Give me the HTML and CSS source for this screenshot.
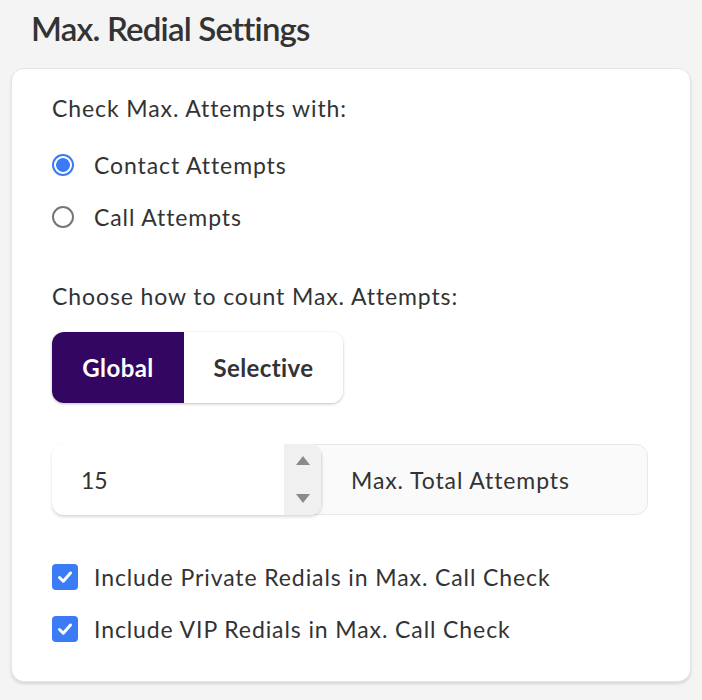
FILE: index.html
```html
<!DOCTYPE html>
<html>
<head>
<meta charset="utf-8">
<link rel="stylesheet" href="styles.css">
</head>
<body>
<h1 class="title">Max. Redial Settings</h1>
<section class="card">
  <p class="label">Check Max. Attempts with:</p>
  <div class="options">
    <label class="option"><span class="radio checked"></span>Contact Attempts</label>
    <label class="option"><span class="radio"></span>Call Attempts</label>
  </div>
  <p class="label label-count">Choose how to count Max. Attempts:</p>
  <div class="segmented">
    <span class="seg active">Global</span>
    <span class="seg">Selective</span>
  </div>
  <div class="input-group">
    <div class="number">
      <span class="value">15</span>
      <span class="spinner">
        <svg width="14" height="9" viewBox="0 0 14 9"><path d="M7 0 L14 9 L0 9 Z" fill="#8a8a8a"/></svg>
        <svg width="14" height="9" viewBox="0 0 14 9"><path d="M0 0 L14 0 L7 9 Z" fill="#8a8a8a"/></svg>
      </span>
    </div>
    <div class="addon">Max. Total Attempts</div>
  </div>
  <div class="checks">
    <label class="option"><span class="checkbox"><svg width="18" height="18" viewBox="0 0 18 18"><path d="M3.5 9.5 L7.3 13.2 L14.5 5" fill="none" stroke="#fff" stroke-width="3" stroke-linecap="round" stroke-linejoin="round"/></svg></span>Include Private Redials in Max. Call Check</label>
    <label class="option"><span class="checkbox"><svg width="18" height="18" viewBox="0 0 18 18"><path d="M3.5 9.5 L7.3 13.2 L14.5 5" fill="none" stroke="#fff" stroke-width="3" stroke-linecap="round" stroke-linejoin="round"/></svg></span>Include VIP Redials in Max. Call Check</label>
  </div>
</section>
</body>
</html>
```
FILE: styles.css
```css
html, body {
  margin: 0;
  padding: 0;
}
body {
  background: #f4f4f4;
  font-family: "Lato", "Noto Sans", sans-serif;
  color: #333333;
  width: 702px;
  height: 700px;
  overflow: hidden;
}
.title {
  margin: 0;
  padding: 8px 0 0 31px;
  font-size: 33px;
  font-weight: 600;
  letter-spacing: -0.8px;
  line-height: 40px;
  height: 60px;
}
.card {
  margin: 0 11px 0 11px;
  background: #fff;
  border: 1px solid #e6e6e6;
  border-radius: 13px;
  box-shadow: 0 2px 3px rgba(0,0,0,0.12);
  padding: 23px 40px 36px 40px;
}
.label {
  margin: 0;
  font-size: 23px;
  letter-spacing: 0.9px;
  line-height: 32px;
}
.options {
  display: flex;
  flex-direction: column;
  gap: 20px;
  margin-top: 25px;
}
.option {
  display: flex;
  align-items: center;
  gap: 16px;
  font-size: 23px;
  letter-spacing: 0.9px;
  line-height: 32px;
}
.radio {
  width: 22px;
  height: 22px;
  box-sizing: border-box;
  border: 2px solid #767676;
  border-radius: 50%;
  flex: none;
  margin-right: 4px;
}
.radio.checked {
  border-color: #3b7bf6;
  background: radial-gradient(circle, #3b7bf6 0 6.5px, #fff 7.2px);
}
.label-count {
  margin-top: 47px;
}
.segmented {
  display: inline-flex;
  margin-top: 20px;
  border-radius: 12px;
  box-shadow: 0 1px 3px rgba(0,0,0,0.25);
  overflow: hidden;
  height: 71px;
}
.seg {
  display: flex;
  align-items: center;
  justify-content: center;
  font-size: 24px;
  font-weight: 700;
  letter-spacing: 0.4px;
  color: #333;
  background: #fff;
  width: 159px;
}
.seg.active {
  background: #330662;
  color: #fff;
  width: 132px;
}
.input-group {
  display: flex;
  margin-top: 41px;
  height: 71px;
  border-radius: 12px;
  border: 1px solid #e8e8e8;
  box-sizing: border-box;
  width: 596px;
  background: #fafafa;
}
.number {
  display: flex;
  width: 270px;
  background: #fff;
  border-radius: 12px;
  box-shadow: 0 2px 3px rgba(0,0,0,0.15);
  margin: -1px 0 -1px -1px;
  overflow: hidden;
}
.value {
  flex: 1;
  display: flex;
  align-items: center;
  padding-left: 29px;
  font-size: 23px;
}
.spinner {
  width: 37px;
  background: #f0f0f0;
  border-right: 1px solid #e0e0e0;
  display: flex;
  flex-direction: column;
  align-items: center;
  justify-content: space-between;
  padding: 12px 0 12px;
}
.addon {
  display: flex;
  align-items: center;
  padding-left: 29px;
  font-size: 23px;
  letter-spacing: 0.9px;
}
.checks {
  display: flex;
  flex-direction: column;
  gap: 20px;
  margin-top: 46px;
}
.checkbox {
  width: 26px;
  height: 26px;
  border-radius: 4px;
  background: #3b7bf6;
  display: flex;
  align-items: center;
  justify-content: center;
  flex: none;
}
```
